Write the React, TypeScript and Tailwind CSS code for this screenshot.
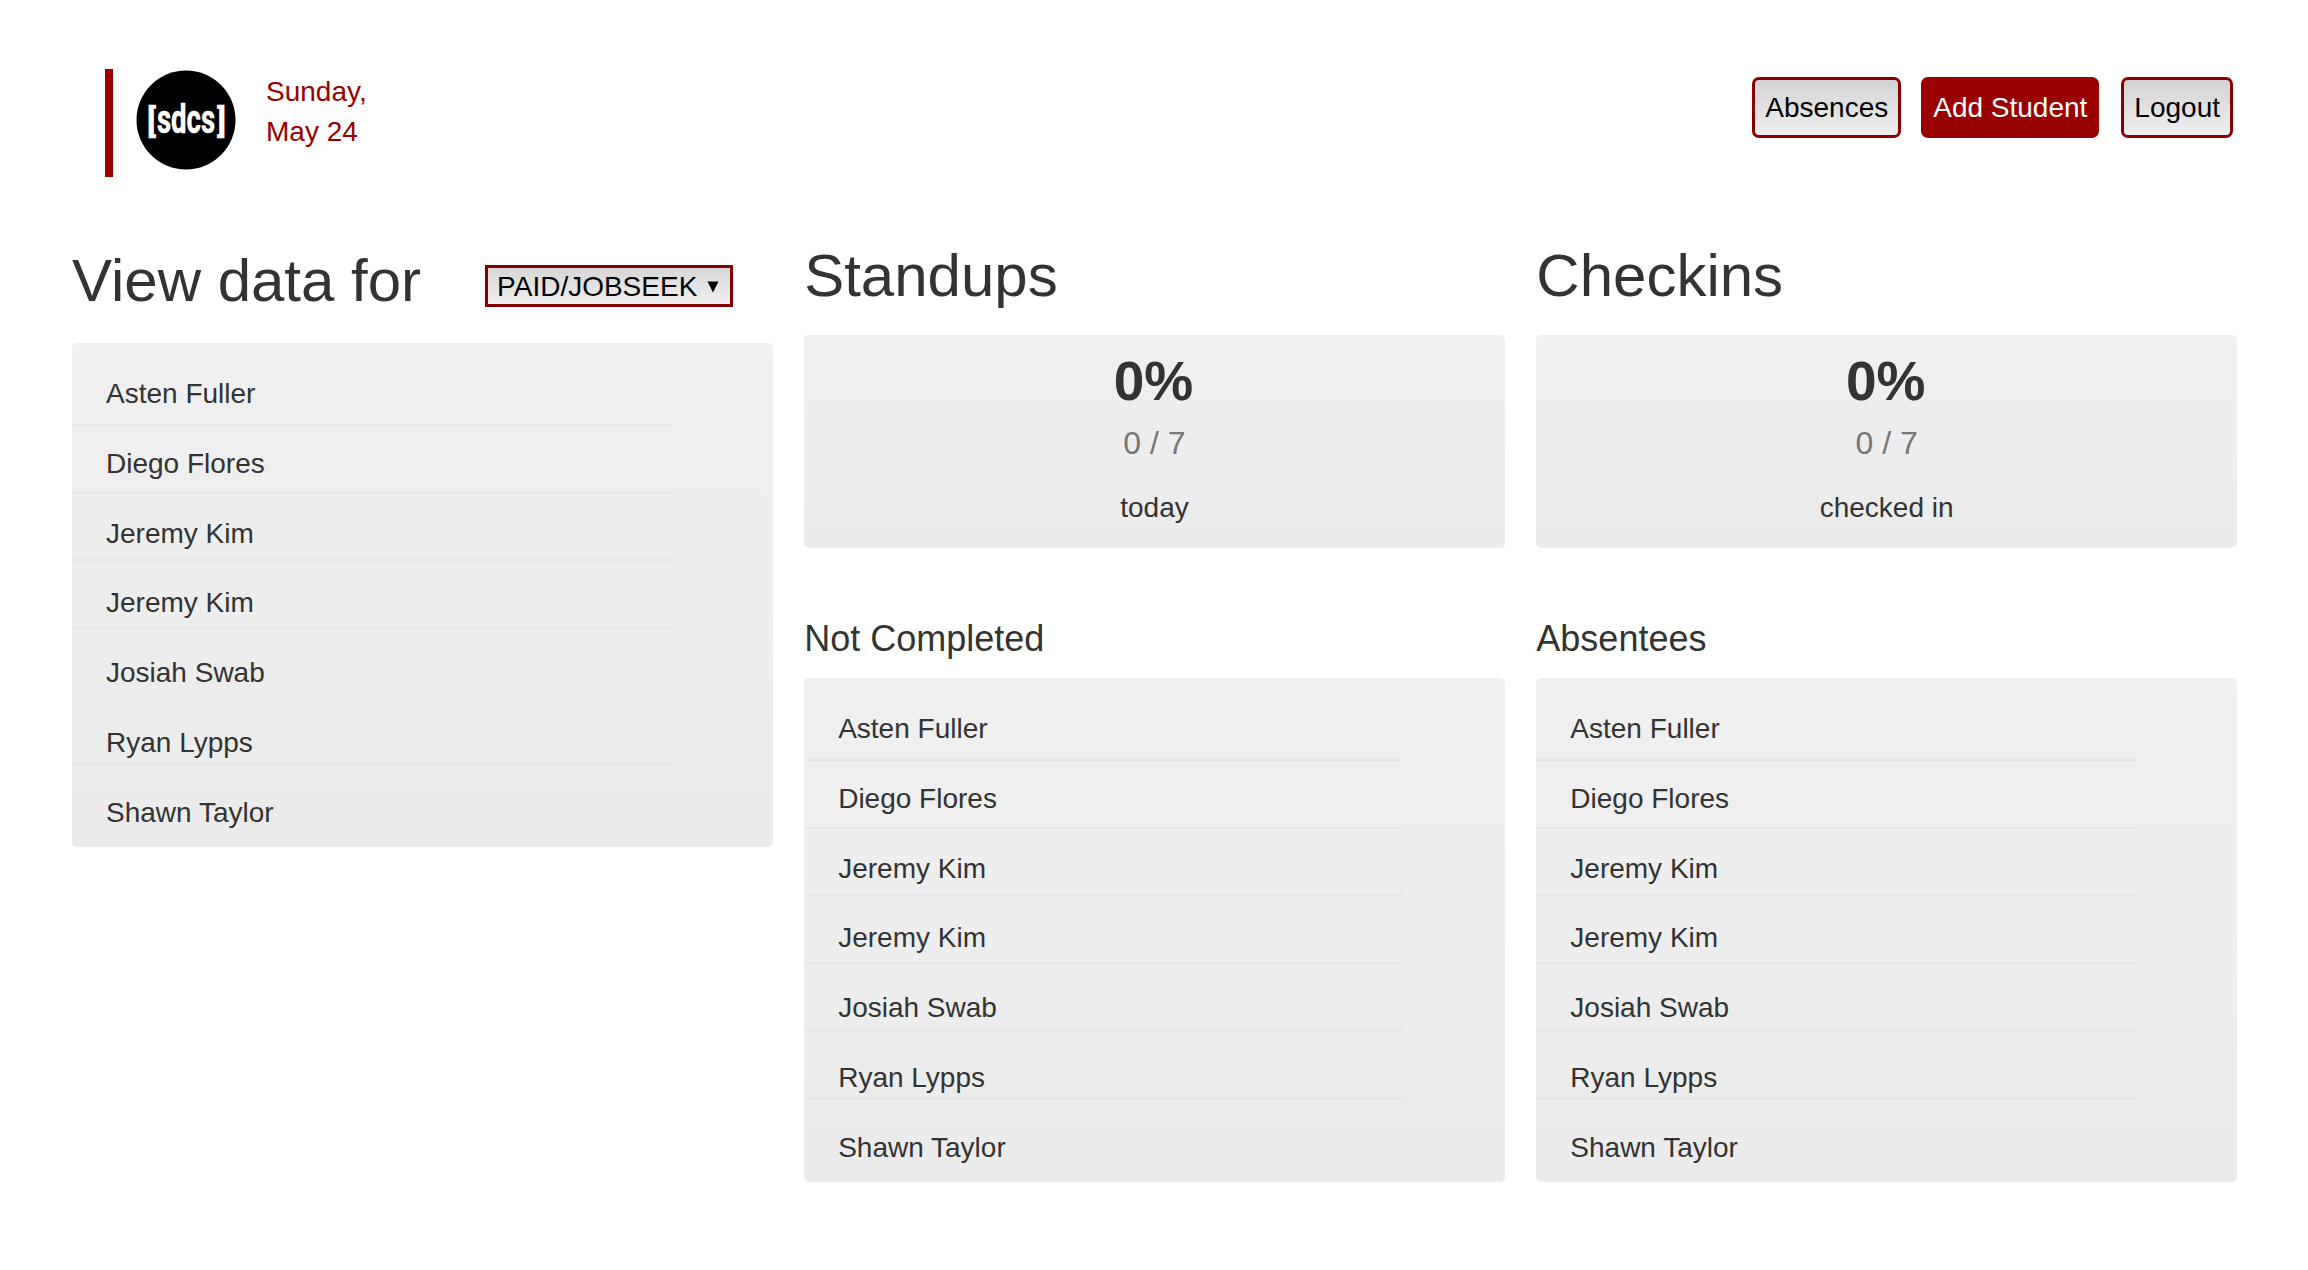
const students = ["Asten Fuller", "Diego Flores", "Jeremy Kim", "Jeremy Kim", "Josiah Swab", "Ryan Lypps", "Shawn Taylor"];

const panel = "rounded-[5px] bg-gradient-to-b from-[#f0f0f0] to-[#ebebeb]";
const greyButton = "h-[61px] rounded-[7px] border-[3px] border-[#8b0000] bg-gradient-to-b from-[#d3d3d3] to-[#efefef] px-[10px] text-black";

const StudentList = () => (
  <ul className={`${panel} pb-[14px] pt-[15px]`}>
    {students.map((name, i) => (
      <li
        key={i}
        style={{ paddingTop: 20 + i * 2 }}
        className={`h-[67.8px] w-[600px] pl-[34px] leading-[32px] text-[#333] ${i < students.length - 1 ? "border-b-2 border-[#e4e9e8]" : ""}`}
      >
        {name}
      </li>
    ))}
  </ul>
);

const StatCard = ({ label }: { label: string }) => (
  <div className={`${panel} flex h-[213px] flex-col items-center pt-[14px] text-center`}>
    <div className="h-[64px] pr-[2px] text-[55px] font-bold leading-[64px] text-[#333]">0%</div>
    <div className="mt-[12px] text-[32px] leading-[36px] text-[#777]">0 / 7</div>
    <div className="mt-[29px] leading-[36px] text-[#333]">{label}</div>
  </div>
);

const StatColumn = ({ title, label, listTitle }: { title: string; label: string; listTitle: string }) => (
  <div>
    <h1 className="-mt-[2px] h-[92px] text-[60px] leading-[66px] text-[#333]">{title}</h1>
    <StatCard label={label} />
    <h2 className="mt-[69px] h-[61px] text-[36px] leading-[44px] text-[#333]">{listTitle}</h2>
    <StudentList />
  </div>
);

export default function App() {
  return (
    <div className="min-h-[1270px] bg-white text-[28px] text-[#333] [font-family:'Liberation_Sans',Arial,sans-serif]">
      <header className="flex items-start justify-between pl-[105px] pr-[75px] pt-[69px]">
        <div className="flex h-[108px] border-l-[8px] border-[#990000] pl-[23px]">
          <svg width="100" height="100" viewBox="0 0 100 100" className="mt-[1px]" fontFamily="Roboto, sans-serif" fontWeight="700" fill="#fff">
            <circle cx="50" cy="50" r="49.5" fill="#000" />
            <text x="11" y="63" fontSize="33" textLength="9" lengthAdjust="spacingAndGlyphs" stroke="#fff" strokeWidth="0.5">[</text>
            <text x="21" y="63" fontSize="40" textLength="58" lengthAdjust="spacingAndGlyphs" stroke="#fff" strokeWidth="0.6">sdcs</text>
            <text x="81" y="63" fontSize="33" textLength="9" lengthAdjust="spacingAndGlyphs" stroke="#fff" strokeWidth="0.5">]</text>
          </svg>
          <div className="ml-[30px] mt-[3px] leading-[40px] text-[#990000]">
            Sunday,
            <br />
            May 24
          </div>
        </div>
        <div className="mt-[8px] flex">
          <button className={greyButton}>Absences</button>
          <button className="ml-[20px] h-[61px] rounded-[7px] bg-[#990000] px-[12px] text-white">Add Student</button>
          <button className={`ml-[22px] ${greyButton}`}>Logout</button>
        </div>
      </header>

      <main className="mt-[68px] grid grid-cols-3 gap-x-[31.5px] pl-[72px] pr-[71px]">
        <div>
          <div className="flex h-[98px] items-start gap-[64px] pt-[3px]">
            <h1 className="text-[60px] leading-[66px] text-[#333]">View data for</h1>
            <div className="mt-[17px] flex h-[42px] w-[248px] items-center border-[3px] border-[#850000] bg-gradient-to-b from-[#d6d6d6] to-[#f0f0f0] pl-[9px] pt-[2px] text-black">
              <span>PAID/JOBSEEK</span>
              <svg width="12" height="12" viewBox="0 0 12 12" className="ml-[10px]">
                <polygon points="0.5,0.5 11.5,0.5 6,11.5" fill="#000" />
              </svg>
            </div>
          </div>
          <StudentList />
        </div>
        <StatColumn title="Standups" label="today" listTitle="Not Completed" />
        <StatColumn title="Checkins" label="checked in" listTitle="Absentees" />
      </main>
    </div>
  );
}
